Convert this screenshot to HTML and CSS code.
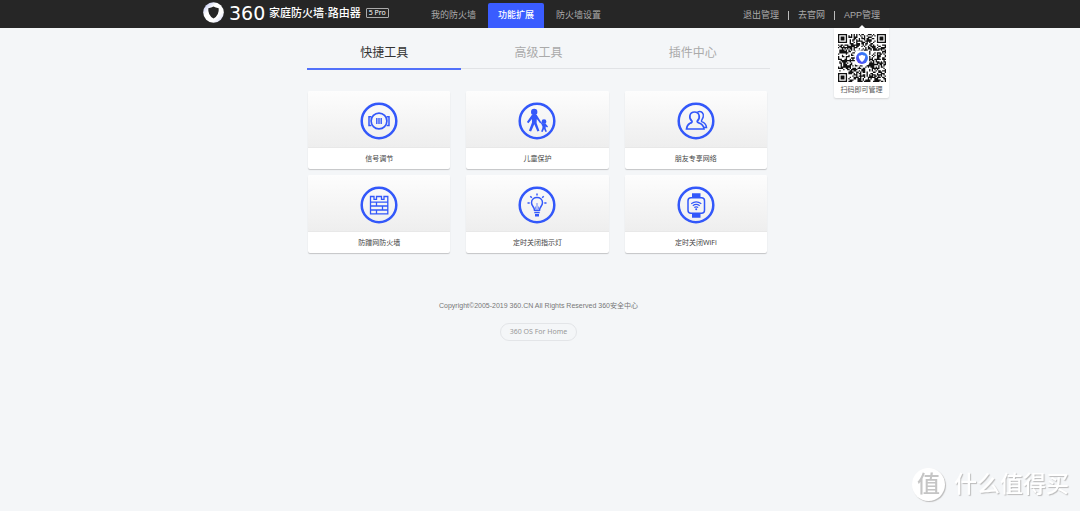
FILE: index.html
```html
<!DOCTYPE html>
<html lang="zh-CN">
<head>
<meta charset="utf-8">
<title>360家庭防火墙·路由器</title>
<link rel="stylesheet" href="styles.css">
</head>
<body>
<header class="topbar">
  <div class="topbar-inner">
    <a class="brand" href="#">
      <svg class="brand-mark" viewBox="0 0 21 21" aria-hidden="true">
        <defs><linearGradient id="ring" x1="0" y1="0" x2="1" y2="1"><stop offset="0" stop-color="#aab4ee"/><stop offset=".35" stop-color="#fff"/><stop offset=".7" stop-color="#fff"/><stop offset="1" stop-color="#c5cbf3"/></linearGradient></defs>
        <circle cx="10.500" cy="10.500" r="10.300" fill="url(#ring)"/>
        <path d="M5.300 6.200Q8.500 6 10.500 4.600Q12.500 6 15.700 6.200Q16.400 13 10.500 16.600Q4.600 13 5.300 6.200Z" fill="#262626"/>
      </svg>
      <span class="brand-num">360</span>
      <span class="brand-name">家庭防火墙·路由器</span>
      <span class="brand-model">5 Pro</span>
    </a>
    <nav class="nav">
      <a href="#">我的防火墙</a>
      <a class="active" href="#">功能扩展</a>
      <a href="#">防火墙设置</a>
    </nav>
    <div class="links">
      <a href="#">退出管理</a>
      <a href="#">去官网</a>
      <div class="app">
        <a href="#">APP管理</a>
        <div class="popup">
          <svg class="qr" viewBox="0 0 37 37" aria-hidden="true">
            <defs><linearGradient id="shield" x1="0" y1="1" x2="1" y2="0"><stop offset="0" stop-color="#5a3df0"/><stop offset="1" stop-color="#2a8cf8"/></linearGradient></defs>
            <path id="modules" fill="#111"/>
            <rect x="13" y="13" width="11" height="11" rx="1.500" fill="#fff"/>
            <circle cx="18.500" cy="18.500" r="4.600" fill="url(#shield)"/>
            <path d="M16 16.800Q17.500 16.700 18.500 16Q19.500 16.700 21 16.800Q21 20 18.500 21.500Q16 20 16 16.800Z" fill="#fff"/>
          </svg>
          <span>扫码即可管理</span>
        </div>
      </div>
    </div>
  </div>
</header>

<main class="main">
  <nav class="tabs">
    <a class="active" href="#">快捷工具</a>
    <a href="#">高级工具</a>
    <a href="#">插件中心</a>
  </nav>
  <div class="grid">
    <a class="card" href="#">
      <span class="card-top"><svg class="icon" viewBox="0 0 38 38" aria-hidden="true"><circle class="ring" cx="19" cy="19" r="17.300"/>
        <circle cx="19" cy="19" r="7.900"/><path d="M11.500 14.800H9v8.600h2.500M26.500 14.800H29v8.600h-2.500" stroke-width="1.500"/><path d="M16.800 16v6M19 16v6M21.200 16v6" stroke-width="1.400"/></svg></span>
      <span class="card-label">信号调节</span>
    </a>
    <a class="card" href="#">
      <span class="card-top"><svg class="icon" viewBox="0 0 38 38" aria-hidden="true"><circle class="ring" cx="19" cy="19" r="17.300"/>
        <circle class="solid" cx="16.200" cy="10" r="3.200"/><path class="solid" d="M13.800 13h5l4 6.500-1.200 1-2.800-3.500-.2 4 2.800 7.800-2 .7-3.100-7.300-3.200 7.300-2.200-.7 3.100-8.200-.1-3.600-3.500 4.200-1.500-1.200Z"/><path d="m21.500 19.500 3 2.500" stroke-width="1.200"/>
        <circle class="solid" cx="26" cy="19.700" r="2.400"/><path class="solid" d="M24.300 21.800h3.400l2.300 2.700-.8.900-1.500-1v2l1.200 3-1.400.5-1.500-3-1.400 3-1.500-.5 1.300-3.300v-2l-1-1.400Z"/></svg></span>
      <span class="card-label">儿童保护</span>
    </a>
    <a class="card" href="#">
      <span class="card-top"><svg class="icon" viewBox="0 0 38 38" aria-hidden="true"><circle class="ring" cx="19" cy="19" r="17.300"/>
        <path d="M15 19.200C11.200 16 12.500 10 17.500 10S23.800 16 20.200 19.200Q20 20.500 22.700 21.300Q26.500 22.800 27 27H9.500Q10 22.800 13 21.300Q15.500 20.500 15 19.200Z"/>
        <path d="M20.500 10C24.500 8.500 27.300 11.500 26.200 15C25.500 17.500 23.700 18.800 24.600 19.600C27.500 20.500 29.200 22 29.500 25.500H27" stroke-width="1.500"/></svg></span>
      <span class="card-label">朋友专享网络</span>
    </a>
    <a class="card" href="#">
      <span class="card-top"><svg class="icon" viewBox="0 0 38 38" aria-hidden="true"><circle class="ring" cx="19" cy="19" r="17.300"/>
        <path d="M10.500 10.500H14v2.800h2.500v-2.800h5v2.800H24v-2.800h3.800v17.300H10.500ZM10.500 16.200h17.300M10.500 20h17.300M10.500 24h17.300M16.500 16.200V20M22.500 20v4M16.500 24v3.800" stroke-width="1.300"/></svg></span>
      <span class="card-label">防蹭网防火墙</span>
    </a>
    <a class="card" href="#">
      <span class="card-top"><svg class="icon" viewBox="0 0 38 38" aria-hidden="true"><circle class="ring" cx="19" cy="19" r="17.300"/>
        <path d="M16.500 24.300C16.500 21 13.500 20 13.500 16.800C13.500 9.800 24.500 9.800 24.500 16.800C24.500 20 21.500 21 21.500 24.300Z" stroke-width="1.500"/><path d="M19 17v6M17.400 20.500v2.500M20.600 20.500v2.500" stroke-width=".7"/><path d="M16.300 26.500h5.400" stroke-width="1.600"/><path d="M17 29.200h4" stroke-width="2.500"/><path d="M19 7.500v2M12.300 10.300l1.500 1.500M25.700 10.300l-1.500 1.500M9.500 17h2.200M26.300 17h2.200" stroke-width="1.500"/></svg></span>
      <span class="card-label">定时关闭指示灯</span>
    </a>
    <a class="card" href="#">
      <span class="card-top"><svg class="icon" viewBox="0 0 38 38" aria-hidden="true"><circle class="ring" cx="19" cy="19" r="17.300"/>
        <rect x="11" y="11.700" width="16.500" height="15.600" rx="3" stroke-width="1.500"/><path class="solid" d="M15 7.300h8.500V11H15ZM15 28h8.500v3.700H15Z"/><path d="M14.200 17.800Q19.200 14 24.300 17.800M15.800 19.700Q19.200 17.200 22.700 19.700M17.300 21.500Q19.200 20.200 21.200 21.500" stroke-width="1.200"/><circle class="solid" cx="19.200" cy="23.300" r="1"/></svg></span>
      <span class="card-label">定时关闭WiFi</span>
    </a>
  </div>
  <footer class="footer">
    <p>Copyright©2005-2019 360.CN All Rights Reserved 360安全中心</p>
    <a class="os" href="#">360 OS For Home</a>
  </footer>
</main>

<div class="watermark"><span class="seal">值</span><span>什么值得买</span></div>
<script src="qr.js"></script>
</body>
</html>
```
FILE: styles.css
```css
* { box-sizing: border-box; }
body {
  margin: 0;
  background: #f4f6f8;
  color: #333;
  font-family: "Liberation Sans", "Noto Sans CJK SC", sans-serif;
}
a { color: inherit; text-decoration: none; }

.topbar { background: #262626; }
.topbar-inner {
  display: flex;
  max-width: 680px;
  height: 28px;
  margin: 0 auto;
  padding-left: 3px;
  color: #aaa;
  font-size: 9px;
  white-space: nowrap;
}
.brand {
  display: flex;
  align-items: center;
  width: 218px;
  height: 25px;
  color: #fff;
}
.brand-mark { width: 21px; height: 21px; }
.brand-num {
  width: 40px;
  margin-left: 5px;
  font: 19px/24px "DejaVu Sans", sans-serif;
}
.brand-name { font-size: 11px; line-height: 24px; font-weight: 500; }
.brand-model {
  margin-left: 5px;
  padding: 0 2px;
  border: 1px solid #aaa;
  border-radius: 1px;
  font: 7px/8px "Noto Sans", sans-serif;
}
.nav { display: flex; align-items: flex-end; gap: 2px; }
.nav a { padding: 0 10px; line-height: 25px; }
.nav .active {
  border-radius: 2px 2px 0 0;
  background: #3a5cff;
  color: #fff;
  font-weight: 500;
}
.links {
  display: flex;
  align-items: flex-end;
  margin-left: auto;
  line-height: 25px;
}
.links > a { display: flex; align-items: center; }
.links > a::after {
  width: 1px;
  height: 9px;
  margin: 0 9px;
  background: #bbb;
  content: "";
}
.app { position: relative; }
.popup {
  position: absolute;
  top: 25px;
  right: -9px;
  display: flex;
  flex-direction: column;
  align-items: center;
  width: 55px;
  padding: 6px 0 1px;
  border-radius: 0 0 2px 2px;
  background: #fff;
  box-shadow: 0 1px 2px #0002;
  color: #555;
  font-size: 7px;
  line-height: 15px;
}
.popup::before {
  position: absolute;
  top: -3px;
  border: 3px solid transparent;
  border-top: 0;
  border-bottom-color: #fff;
  content: "";
}
.qr { width: 48px; height: 48px; }

.main { max-width: 466px; margin: 0 auto; padding-top: 11px; }
.tabs {
  display: grid;
  grid-template-columns: repeat(3, 1fr);
  margin-right: 3px;
  color: #aaa;
  font-size: 12px;
  line-height: 29px;
  text-align: center;
  background: linear-gradient(#e1e3e6, #e1e3e6) 0 29px / 100% 1px no-repeat;
}
.tabs a { padding-top: 0; border-bottom: 2px solid transparent; }
.tabs .active { border-color: #5271fa; color: #333; }
.grid {
  display: grid;
  grid-template-columns: repeat(3, 1fr);
  gap: 6px 16px;
  padding: 21px 6px 0 1px;
}
.card {
  border-radius: 2px;
  background: #fff;
  box-shadow: 0 1px 1px #0003;
  overflow: hidden;
}
.card-top {
  display: flex;
  align-items: center;
  justify-content: center;
  height: 57px;
  padding-top: 3px;
  border-bottom: 1px solid #e8e8e8;
  background: linear-gradient(#fdfdfd, #eee);
}
.card-label {
  display: block;
  color: #444;
  font-family: "Noto Sans", "Noto Sans CJK SC", sans-serif;
  font-size: 7px;
  line-height: 21px;
  text-align: center;
}
.icon {
  width: 38px;
  height: 38px;
  fill: none;
  stroke: #3358fa;
  stroke-width: 1.7;
}
.icon .ring { stroke-width: 2.5; }
.icon .solid { fill: #3358fa; stroke: none; }

.footer {
  padding: 47px 3px 0 0;
  color: #777;
  font-size: 7px;
  text-align: center;
}
.footer p { margin: 0 0 11px; line-height: 12px; }
.os {
  display: inline-block;
  padding: 0 9px;
  border: 1px solid #e3e5e8;
  border-radius: 9px;
  color: #999;
  font: 7px/16px "Noto Sans", sans-serif;
}

.watermark {
  position: fixed;
  right: 11px;
  bottom: 10px;
  display: flex;
  align-items: center;
  gap: 9px;
  color: #fff;
  font-size: 23px;
  font-weight: 500;
  line-height: 34px;
  text-shadow: 1px 1px 1px #bbb;
}
.seal {
  width: 33px;
  height: 33px;
  border-radius: 50%;
  background: #fff;
  box-shadow: 1px 1px 1px #bbb;
  color: #c5c5c5;
  line-height: 32px;
  text-align: center;
  text-shadow: none;
}
```
FILE: qr.js
```js
// Fills the code's grid: three finder squares and seeded data modules.
const size = 37;
const corners = [[0, 0], [size - 7, 0], [0, size - 7]];
let seed = 360;
let d = "";

function isDark(x, y) {
  seed = (seed * 1103515245 + 12345) % 2147483648;
  const random = seed / 2147483648 < 0.52;
  for (const [cx, cy] of corners) {
    const ring = Math.max(Math.abs(x - cx - 3), Math.abs(y - cy - 3));
    if (ring <= 4) return ring === 3 || ring <= 1;
  }
  return random;
}

for (let y = 0; y < size; y++) {
  for (let x = 0; x < size; x++) {
    if (isDark(x, y)) d += `M${x} ${y}h1v1h-1z`;
  }
}
document.getElementById("modules").setAttribute("d", d);
```
